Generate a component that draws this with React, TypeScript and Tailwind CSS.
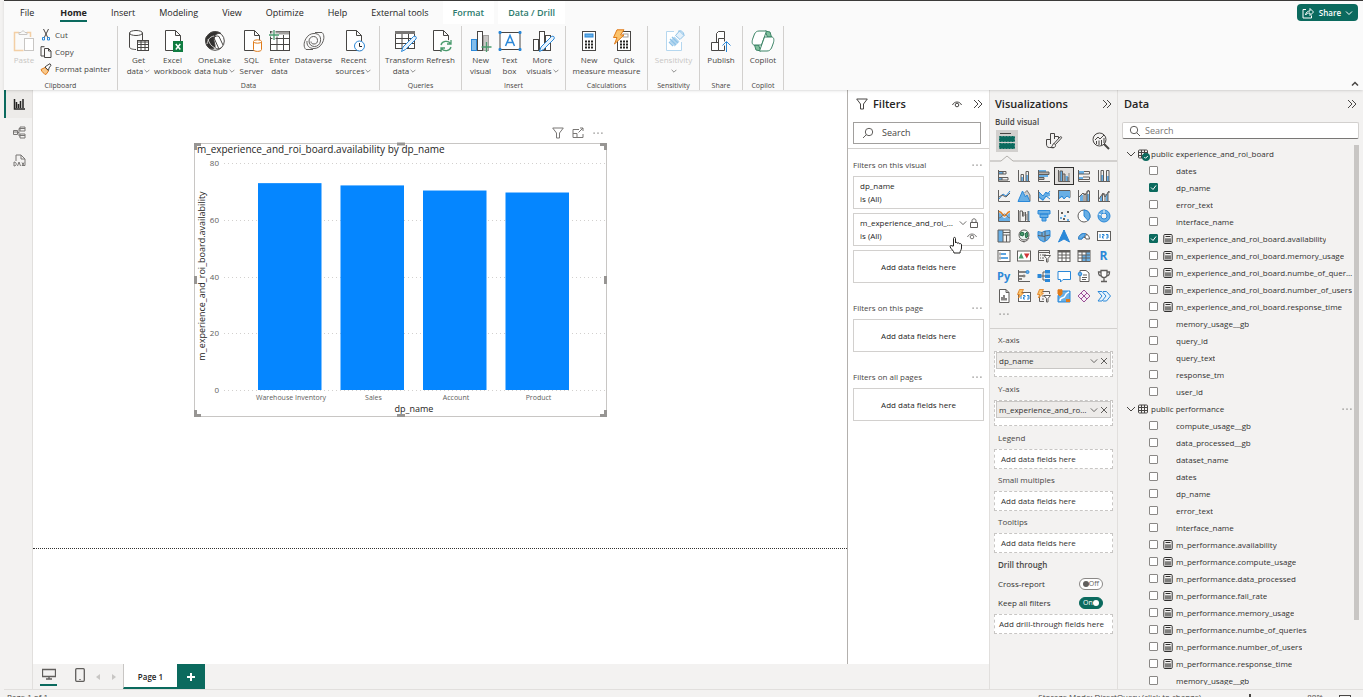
import React, { useState } from 'react';
import clsx from 'clsx';

type IconProps = { className?: string; box?: string; stroke?: string; children: React.ReactNode };

const Svg: React.FC<IconProps> = ({ className, box = '0 0 24 24', stroke = '#484644', children }) => (
  <svg viewBox={box} className={clsx('shrink-0', className)} fill="none" stroke={stroke} strokeWidth="1" aria-hidden="true">
    {children}
  </svg>
);

const BLUE = '#2b88d8';
const SKY = '#69afe5';
const GRAY = '#b3b0ad';
const ORANGE = '#e07b1a';
const GREEN = '#4a9b6e';

/* ---------- small shared glyphs ---------- */

const Chevrons = () => (
  <Svg box="0 0 10 10" className="size-2.5">
    <path d="M1 1l4 4-4 4M5 1l4 4-4 4" />
  </Svg>
);
const Down: React.FC<{ className?: string }> = ({ className = 'size-2.5' }) => (
  <Svg box="0 0 10 10" className={className}>
    <path d="M1 3l4 4 4-4" />
  </Svg>
);
const Cross = () => (
  <Svg box="0 0 8 8" className="size-2" stroke="#605e5c">
    <path d="M1 1l6 6M7 1L1 7" />
  </Svg>
);
const Eye: React.FC<{ stroke?: string }> = ({ stroke }) => (
  <Svg box="0 0 12 10" className="h-2.5 w-3" stroke={stroke}>
    <path d="M1.500 6C3 2 9 2 10.500 6" />
    <circle cx="6" cy="6" r="1.800" />
  </Svg>
);
const Funnel: React.FC<{ stroke?: string }> = ({ stroke }) => (
  <Svg box="0 0 12 12" className="size-3" stroke={stroke}>
    <path d="M.7 1h10.600L7.500 6v5h-3V6z" />
  </Svg>
);
const Lens: React.FC<{ flip?: boolean }> = ({ flip }) => (
  <Svg box="0 0 12 12" className={clsx('size-3', flip && '-scale-x-100')} stroke="#605e5c">
    <circle cx="5" cy="5" r="3.700" />
    <path d="M7.700 7.700L11 11" />
  </Svg>
);
const Dots: React.FC<{ className?: string }> = ({ className = 'w-2.5' }) => (
  <Svg box="0 0 10 4" className={clsx('h-1', className)}>
    <path stroke="none" fill="#797775" d="M.5 1.500h1.200v1.200H.5zM4.400 1.500h1.200v1.200H4.400zM8.300 1.500h1.200v1.200H8.300z" />
  </Svg>
);
const Calc = () => (
  <Svg box="0 0 10 10" className="size-2.5" stroke="#323130">
    <rect x=".8" y=".5" width="8.400" height="9" rx="1" />
    <path d="M2.500 2.500h5" />
    <path d="M3 4.200v4.300M5 4.200v4.300M7 4.200v4.300" strokeWidth="1.200" />
  </Svg>
);

/* ---------- ribbon icons ---------- */

const page = <path d="M4.500 1.500h10l5 5v15h-15zM14.500 1.500v5h5" fill="#fff" />;
const calculator = (
  <>
    <rect x="5.500" y="2.500" width="13" height="19" fill="#fff" />
    <path d="M8 12.500h8M8 15.500h8M8 18.500h8" strokeWidth="2" strokeDasharray="2 1" stroke="#252423" />
  </>
);
const pencil = <path d="M8.500 22.500l1.500-4.500L20.500 7.500c2-1 3.500.5 2.500 2.500L12.500 20.500z" fill="#e8f3fc" stroke={BLUE} />;

const RIBBON: Record<string, React.ReactNode> = {
  paste: (
    <>
      <path d="M7 3.500H2.500v18h9M15 3.500h3.500V8" stroke="#f3cfa5" strokeWidth="1.500" />
      <path d="M7 5.500v-2h2l2-2 2 2h2v2z" stroke="#c8c6c4" />
      <rect x="12.500" y="9.500" width="9" height="12" stroke="#c8c6c4" fill="#fff" />
    </>
  ),
  getData: (
    <>
      <ellipse cx="9" cy="4" rx="6.500" ry="2.500" fill="#fff" />
      <path d="M2.500 4v14c0 1.500 3 2.500 6.500 2.500M15.500 4v7" />
      <rect x="10.500" y="11.500" width="11" height="10" fill="#fff" />
      <path d="M10.500 13h11M10.500 15.500h11M10.500 18.500h11M14 12v9.500M18 12v9.500" />
    </>
  ),
  excel: (
    <>
      {page}
      <rect x="12" y="12" width="10" height="11" fill="#107c41" stroke="none" />
      <path d="M14.800 15l4.500 5.500M19.300 15l-4.500 5.500" stroke="#fff" strokeWidth="1.500" />
    </>
  ),
  oneLake: (
    <>
      <circle cx="12" cy="12" r="9.300" fill="#fff" />
      <path d="M4.500 6.500C8 1.500 15 2 18 4.500c-3.500-.5-6.500 1-7 4.500-.5 4 1.500 6 1 9.500C9 21.500 4 19 3 14s.3-6 1.500-7.500z" fill="#323130" />
      <path d="M11 9c1-2 3-2.500 5-1.500L20 16M11 9l5 11M12 18.500c2 2 5 1.500 6.500 0" />
      <path d="M4 15c1-4 2-7 7-8M5 10c1 4 3 7 7 9" stroke="#d2d0ce" />
    </>
  ),
  sql: (
    <>
      {page}
      <path d="M13.500 13v7.500c0 2.500 8 2.500 8 0V13" fill="#fff" stroke={ORANGE} />
      <ellipse cx="17.500" cy="12.500" rx="4" ry="1.700" fill="#fff" stroke={ORANGE} />
    </>
  ),
  enter: (
    <>
      <rect x="2.500" y="2.500" width="19" height="19" fill="#fff" />
      <path d="M3 4h18" stroke="#a19f9d" strokeWidth="3" />
      <path d="M2.500 9.500h19M2.500 15.500h19M9 6v16M15.500 6v16" />
      <path d="M6 0v11M1 6h10" stroke="#fafafa" strokeWidth="3" />
      <path d="M6 1v10M1 6h10" stroke={GREEN} strokeWidth="1.300" />
    </>
  ),
  dataverse: (
    <g stroke="#605e5c">
      <path d="M13 3.500h7c2.500 2 2.500 7 0 11-2 3.500-5 5-8 5M11 20.500H4c-2.500-2-2.500-7 0-11 2-3.500 5-5 8-5" />
      <path d="M12 4.500c5 0 7 3 6.500 7.500-.5 3.500-3 5.500-6 5.500-3.500 0-5.500-2.500-5.500-5.500 0-2.500 2-4.500 4.500-4.500s4 1.500 4 4-1.500 3.500-3.500 3.500-3-1-3-2.500" />
      <path d="M12 19.500c-5 0-7.500-3-7-7.500" />
    </g>
  ),
  recent: (
    <>
      {page}
      <circle cx="17.500" cy="17" r="5" fill="#fff" stroke={BLUE} />
      <path d="M17.500 14v3.500H20" stroke="#252423" />
    </>
  ),
  transform: (
    <>
      <rect x="2.500" y="2.500" width="19" height="17" fill="#fff" />
      <path d="M2 3.500h20" strokeWidth="3" stroke="#797775" />
      <path d="M2.500 9.500h19M2.500 14.500h19M9 5v15M15.500 5v15" />
      {pencil}
    </>
  ),
  refresh: (
    <>
      {page}
      <circle cx="17" cy="17" r="6.500" fill="#fafafa" stroke="none" />
      <path d="M12 16c1-4 7-5 9.500-1.500M22 11v4h-4M22 18c-1 4-7 5-9.500 1.500M12 23v-4h4" stroke={GREEN} strokeWidth="1.300" />
    </>
  ),
  newVisual: (
    <>
      <rect x="2.500" y="10.500" width="5" height="11" fill="#83bdeb" stroke={BLUE} />
      <rect x="8.500" y="2.500" width="5" height="19" fill="#fff" />
      <rect x="14.500" y="6.500" width="5" height="15" fill="#c8c6c4" stroke="#a19f9d" />
      <path d="M17.500 13v10M12.500 18h10" stroke={GREEN} strokeWidth="1.300" />
    </>
  ),
  textBox: (
    <>
      <rect x="2" y="3.500" width="20" height="17" fill="#fff" />
      <path d="M1 2.500h2v2H1zM21 2.500h2v2h-2zM1 19.500h2v2H1zM21 19.500h2v2h-2z" fill={BLUE} stroke={BLUE} />
      <path d="M7.500 17L12 6.500 16.500 17M9 13.500h6" stroke={BLUE} strokeWidth="1.500" />
    </>
  ),
  moreVisuals: (
    <>
      <rect x="2.500" y="10.500" width="5" height="11" fill="#fff" />
      <rect x="8.500" y="2.500" width="5" height="19" fill="#fff" />
      <rect x="14.500" y="6.500" width="5" height="15" fill="#fff" />
      {pencil}
    </>
  ),
  newMeasure: (
    <>
      {calculator}
      <rect x="8" y="5" width="8" height="3" fill={SKY} stroke={BLUE} />
    </>
  ),
  quickMeasure: (
    <>
      {calculator}
      <rect x="11" y="5" width="5" height="3" stroke="#a19f9d" />
      <path d="M5 .8h7L8.500 6H12L2.500 15l2.500-6.500H1.500z" fill="#fbc36b" stroke={ORANGE} />
    </>
  ),
  sensitivity: (
    <>
      <path d="M12 2.500H4.500v19h15V13" stroke="#b5d7ef" fill="#fff" />
      <path d="M7.500 12.500l5-5 5 5-5 5z" fill="#b5d7ef" stroke="none" />
      <path d="M8 10l6 6M10 8l6 6M7 13l4 4" stroke="#8fc3e8" strokeWidth="1.300" />
      <path d="M13.500 6.500l4-4.500 4.500 4.500-4 4zM16 2.500c2-2 6 0 6 4" stroke="#8fc3e8" fill="#e3f0fa" />
    </>
  ),
  publish: (
    <>
      <path d="M7.500 13V4.500l2-2h6v7M2.500 13.500h7v8h-7zM9.500 9.500h6v12h-6z" fill="#fff" />
      <path d="M17.500 23V13M13.500 16.500l4-4 4 4" stroke="#fafafa" strokeWidth="3" />
      <path d="M17.500 23V13M13.500 16.500l4-4 4 4" stroke={BLUE} />
    </>
  ),
  copilot: (
    <g stroke="#3c8466">
      <path d="M14 2l5 1 1.500 5h-4z" fill="#7fbf9c" />
      <path d="M10 22l-5-1-1.500-5h4z" fill="#7fbf9c" />
      <path d="M8 2h7.500L10.500 16H3.500C.5 16 .8 12 2 9l1.500-4C4.500 3 6 2 8 2z" fill="#fff" />
      <path d="M16 22H8.500l5-14h7c3 0 2.700 4 1.500 7l-1.500 4c-1 2-2.500 3-4.500 3z" fill="#fff" />
    </g>
  ),
};

interface RibbonItem {
  icon: string;
  lines: string[];
  width: string;
  menu?: boolean;
  disabled?: boolean;
}

const RIBBON_GROUPS: { name: string; width: string; items: RibbonItem[] }[] = [
  {
    name: 'Data',
    width: 'w-[262px]',
    items: [
      { icon: 'getData', lines: ['Get', 'data'], width: 'w-7', menu: true },
      { icon: 'excel', lines: ['Excel', 'workbook'], width: 'w-10' },
      { icon: 'oneLake', lines: ['OneLake', 'data hub'], width: 'w-11', menu: true },
      { icon: 'sql', lines: ['SQL', 'Server'], width: 'w-[30px]' },
      { icon: 'enter', lines: ['Enter', 'data'], width: 'w-[26px]' },
      { icon: 'dataverse', lines: ['Dataverse'], width: 'w-[42px]' },
      { icon: 'recent', lines: ['Recent', 'sources'], width: 'w-[38px]', menu: true },
    ],
  },
  {
    name: 'Queries',
    width: 'w-[82px]',
    items: [
      { icon: 'transform', lines: ['Transform', 'data'], width: 'w-10', menu: true },
      { icon: 'refresh', lines: ['Refresh'], width: 'w-8' },
    ],
  },
  {
    name: 'Insert',
    width: 'w-[104px]',
    items: [
      { icon: 'newVisual', lines: ['New', 'visual'], width: 'w-7' },
      { icon: 'textBox', lines: ['Text', 'box'], width: 'w-[30px]' },
      { icon: 'moreVisuals', lines: ['More', 'visuals'], width: 'w-9', menu: true },
    ],
  },
  {
    name: 'Calculations',
    width: 'w-[82px]',
    items: [
      { icon: 'newMeasure', lines: ['New', 'measure'], width: 'w-[35px]' },
      { icon: 'quickMeasure', lines: ['Quick', 'measure'], width: 'w-[35px]' },
    ],
  },
  {
    name: 'Sensitivity',
    width: 'w-[52px]',
    items: [{ icon: 'sensitivity', lines: ['Sensitivity', ''], width: 'w-11', menu: true, disabled: true }],
  },
  { name: 'Share', width: 'w-[43px]', items: [{ icon: 'publish', lines: ['Publish'], width: 'w-9' }] },
  { name: 'Copilot', width: 'w-[41px]', items: [{ icon: 'copilot', lines: ['Copilot'], width: 'w-9' }] },
];

const TABS = ['File', 'Home', 'Insert', 'Modeling', 'View', 'Optimize', 'Help', 'External tools', 'Format', 'Data / Drill'];

const RibbonButton: React.FC<{ item: RibbonItem }> = ({ item }) => (
  <button
    type="button"
    disabled={item.disabled}
    className={clsx('flex shrink-0 flex-col items-center whitespace-nowrap', item.width, item.disabled && 'text-[#c8c6c4]')}
  >
    <Svg className="size-6">{RIBBON[item.icon]}</Svg>
    <span className="mt-px flex flex-col items-center leading-[11px]">
      {item.lines.map((line, i) => (
        <span key={i} className="flex h-[11px] items-center gap-px">
          {line}
          {item.menu && i === item.lines.length - 1 && <Down className="size-1.5" />}
        </span>
      ))}
    </span>
  </button>
);

const Ribbon = () => (
  <header className="relative z-10 flex h-[90px] shrink-0 flex-col border-t border-[#3b3a39] bg-[#fafafa] shadow-sm">
    <div className="flex h-[23px] items-stretch pl-1.5 text-[9px]">
      <nav className="flex gap-1">
        {TABS.map((tab, i) => (
          <button
            key={tab}
            type="button"
            className={clsx(
              'relative px-2.5 whitespace-nowrap',
              tab === 'File' && 'mr-0.5',
              i > 7 && 'bg-white font-semibold text-[#2b7a6d]',
              tab === 'Home' && 'font-bold'
            )}
          >
            {tab}
            {tab === 'Home' && <span className="absolute inset-x-2.5 bottom-0.5 h-0.5 bg-[#0b6a5e]" />}
          </button>
        ))}
      </nav>
      <button type="button" className="mt-[3px] mr-[5px] ml-auto flex h-[17px] items-center gap-[5px] rounded-sm bg-[#0b6a5e] px-[5px] text-[8px] font-semibold text-white">
        <Svg box="0 0 12 12" className="size-3" stroke="#fff">
          <path d="M4 2.500H1v8.500h8.500V8.500M3.500 8C4 5 6 4 8 4V1.500l3.500 3.500L8 8.500V6c-2 0-3.500.5-4.500 2z" />
        </Svg>
        <span className="flex items-center gap-1">
          Share
          <Svg box="0 0 8 8" className="size-2" stroke="#fff">
            <path d="M1 2.500l3 3 3-3" />
          </Svg>
        </span>
      </button>
    </div>

    <div className="flex min-h-0 flex-1 pt-0.5 text-[8px] text-[#484644]">
      <section className="flex w-[114px] shrink-0 flex-col items-center border-r border-[#d2d0ce]">
        <div className="flex w-full flex-1 gap-1 pt-[3px] pl-2">
          <button type="button" disabled className="flex w-6 flex-col items-center text-[#c8c6c4]">
            <Svg className="size-6">{RIBBON.paste}</Svg>
            <span className="mt-px leading-[11px]">Paste</span>
          </button>
          <div className="flex flex-col">
            <button type="button" className="flex h-[17px] items-center gap-[3px] pb-1.5">
              <Svg box="0 0 12 12" className="size-3">
                <path d="M3.500 0L8 9M8.500 0L4 9" />
                <path d="M2.500 8.500h2v2.500h-2zM7.500 8.500h2v2.500h-2z" stroke={BLUE} />
              </Svg>
              Cut
            </button>
            <button type="button" className="flex h-[17px] items-center gap-[3px] pb-1.5">
              <Svg box="0 0 12 12" className="size-3">
                <path d="M4 10H1V.7h3.500M4.500 2.500h4L11 5v6.500H4.500zM8.500 2.500V5H11" />
              </Svg>
              Copy
            </button>
            <button type="button" className="flex h-[17px] items-center gap-[3px] pb-1.5 whitespace-nowrap">
              <Svg box="0 0 12 12" className="size-3">
                <path d="M1 6.500l4-2 3.500 3.500L6 11.500C4 11 2 9 1 6.500z" fill="#f9c98c" stroke={ORANGE} />
                <path d="M5 4l2-1.500L10 .7l1 1.500-2 2.800L8.500 7.500z" fill="#fff" />
              </Svg>
              Format painter
            </button>
          </div>
        </div>
        <span className="text-[7px] leading-[9px]">Clipboard</span>
      </section>
      {RIBBON_GROUPS.map(group => (
        <section key={group.name} className={clsx('flex shrink-0 flex-col items-center border-r border-[#d2d0ce]', group.width)}>
          <div className="flex flex-1 items-start justify-center pt-[3px]">
            {group.items.map(item => (
              <RibbonButton key={item.icon} item={item} />
            ))}
          </div>
          <span className="text-[7px] leading-[9px]">{group.name}</span>
        </section>
      ))}
      <button type="button" aria-label="Collapse ribbon" className="mt-auto mr-1 mb-0.5 ml-auto">
        <Svg box="0 0 8 8" className="size-2">
          <path d="M1 5.500l3-3 3 3" strokeWidth="1.500" />
        </Svg>
      </button>
    </div>
  </header>
);

/* ---------- report canvas ---------- */

const BARS = [
  { label: 'Warehouse Inventory', value: 72.9 },
  { label: 'Sales', value: 72.1 },
  { label: 'Account', value: 70.3 },
  { label: 'Product', value: 69.6 },
];
const TICKS = [80, 60, 40, 20, 0];
const yOf = (v: number) => 247 - (v * 227) / 80;

const BarChart = () => (
  <svg viewBox="0 0 413 274" className="block w-full overflow-visible" role="img" aria-label="m_experience_and_roi_board.availability by dp_name">
    {TICKS.map(t => (
      <g key={t}>
        <path d={`M30 ${Math.round(yOf(t)) + 0.5}H411`} stroke="#d2d0ce" strokeDasharray="1 3" />
        <text x="25" y={yOf(t) + 3} textAnchor="end" fontSize="8" fill="#605e5c">{t}</text>
      </g>
    ))}
    {BARS.map((b, i) => (
      <g key={b.label}>
        <rect x={64 + i * 82.5} y={yOf(b.value)} width="63.500" height={247 - yOf(b.value)} fill="#0586ff" />
        <text x={97 + i * 82.5} y="257" textAnchor="middle" fontSize="7" fill="#605e5c">{b.label}</text>
      </g>
    ))}
    <text x="220" y="269" textAnchor="middle" fontSize="9" fill="#252423">dp_name</text>
    <text transform="translate(11 133) rotate(-90)" textAnchor="middle" fontSize="9" fill="#252423">
      m_experience_and_roi_board.availability
    </text>
    {/* selection frame and its resize handles */}
    <rect x=".5" y=".5" width="412" height="273" fill="none" stroke="#c8c6c4" />
    <path
      d="M1.500 7V1.500H7M406 1.500h5.500V7M1.500 267v5.500H7M406 272.500h5.500V267M203 1h8M203 272.500h8M1.500 133v8M411.500 133v8"
      fill="none"
      stroke="#979593"
      strokeWidth="3"
    />
    <text x="3" y="10" fontSize="10" fill="#252423">m_experience_and_roi_board.availability by dp_name</text>
  </svg>
);

const Canvas = () => (
  <main className="relative min-w-0 flex-1 overflow-hidden bg-white">
    <div className="h-[459px] border-b border-dotted border-[#323130]" />
    <figure className="absolute top-[37px] left-[161px] w-[413px]">
      <div className="flex h-4 items-start justify-end gap-2 pr-[3px]">
        <Funnel stroke="#797775" />
        <Svg box="0 0 12 12" className="size-3" stroke="#797775">
          <path d="M7 2.500H1v8h10V7M1 6.500h4v4M6.500 5.500L11 1M8 1h3v3" />
        </Svg>
        <span className="pt-1"><Dots className="w-3" /></span>
      </div>
      <BarChart />
    </figure>
  </main>
);

const RAIL = [
  { name: 'Report view', art: <path d="M1.500 1v10H12M3.500 4v6M5.500 6v4M7.500 3v7M10 1v9" strokeWidth="1.500" stroke="#252423" /> },
  { name: 'Model view', art: <path d="M7 1h5v4H7zM7 8h5v4H7zM.5 4.500h4v4h-4zM4.500 6.500H6v-4h1M6 6.500V10h1M7 2.500h5M7 9.500h5M.5 6h4" stroke="#797775" /> },
  { name: 'DAX query view', art: <path d="M3 7V1h5l4 4v6.500H9M8 1v4h4M1 8v4M1 8c3 0 3 4 0 4M4.500 12L6 8l1.500 4M9 8.500l2 3.500M11 8.500L9 12" stroke="#797775" /> },
];

const Rail = () => (
  <nav className="flex w-[29px] shrink-0 flex-col border-r border-[#e1dfdd]">
    {RAIL.map((view, i) => (
      <button
        key={view.name}
        type="button"
        aria-label={view.name}
        className={clsx('flex h-7 items-center justify-center border-l-2', i === 0 ? 'border-[#0b6a5e] bg-[#edebe9]' : 'border-transparent')}
      >
        <Svg box="0 0 13 13" className="size-[13px]">{view.art}</Svg>
      </button>
    ))}
  </nav>
);

const PageTabs = () => (
  <footer className="flex h-[25px] shrink-0 items-stretch">
    <button type="button" aria-label="Desktop layout" className="mb-[3px] ml-[7px] flex w-[17px] flex-col items-center border-b-2 border-[#0b6a5e] pt-1">
      <Svg box="0 0 14 12" className="h-3 w-3.5" stroke="#605e5c">
        <path d="M.5 1.500h13v7H.5zM7 8.500v2M4 11h6" strokeWidth="1.300" />
      </Svg>
    </button>
    <button type="button" aria-label="Mobile layout" className="ml-[15px] flex w-4 justify-center pt-1">
      <Svg box="0 0 10 14" className="h-3.5 w-2.5" stroke="#605e5c">
        <rect x=".7" y=".7" width="8.600" height="12.600" rx="1" strokeWidth="1.300" />
        <path d="M4.300 11.500h1.400" />
      </Svg>
    </button>
    <div className="flex w-[35px] items-center justify-center gap-3">
      <Svg box="0 0 4 6" className="h-1.5 w-1"><path d="M4 0v6L0 3z" fill="#c8c6c4" stroke="none" /></Svg>
      <Svg box="0 0 4 6" className="h-1.5 w-1"><path d="M0 0v6l4-3z" fill="#c8c6c4" stroke="none" /></Svg>
    </div>
    <button type="button" className="w-[54px] border-b-2 border-l border-b-[#0b6a5e] border-l-[#c8c6c4] bg-white pt-0.5 text-[8px] font-semibold">
      Page 1
    </button>
    <button type="button" aria-label="New page" className="flex w-7 items-center justify-center bg-[#0b6a5e]">
      <Svg box="0 0 8 8" className="size-2"><path d="M4 0v8M0 4h8" stroke="#fff" strokeWidth="2" /></Svg>
    </button>
  </footer>
);

/* ---------- filters ---------- */

const DropBox = () => (
  <div className="mr-[5px] flex h-[33px] items-center justify-center border border-[#d2d0ce] bg-white">Add data fields here</div>
);
const FilterHeading: React.FC<{ children: string }> = ({ children }) => (
  <h3 className="flex h-[22px] items-center justify-between pr-[7px] text-[#484644]">
    {children}
    <Dots />
  </h3>
);

const FiltersPane = () => (
  <aside className="w-[142px] shrink-0 border-l border-[#b3b0ad] bg-white text-[8px]">
    <div className="flex h-7 items-center pr-1.5 pl-2">
      <Funnel />
      <h2 className="ml-[5px] text-[11px] font-semibold">Filters</h2>
      <button type="button" aria-label="Hide filters" className="mr-2.5 ml-auto"><Eye /></button>
      <button type="button" aria-label="Collapse filters"><Chevrons /></button>
    </div>
    <div className="border-b border-[#d2d0ce] pt-1 pr-2 pb-1 pl-[5px]">
      <label className="flex h-[22px] items-center gap-2 border border-[#a19f9d] px-2">
        <Lens flip />
        <input type="search" placeholder="Search" aria-label="Search filters" className="w-full min-w-0 text-[9px] outline-none placeholder:text-[#484644]" />
      </label>
    </div>
    <div className="pt-[5px] pl-[5px]">
      <FilterHeading>Filters on this visual</FilterHeading>
      <div className="mr-[5px] mb-1 h-[33px] border border-[#d2d0ce] px-1.5 pt-0.5 leading-[13px]">
        <p>dp_name</p>
        <p>is (All)</p>
      </div>
      <div className="relative mr-[5px] mb-1 h-[33px] border border-[#d2d0ce] pt-0.5 pr-[5px] pl-1.5 leading-[13px]">
        <div className="flex items-center gap-[3px]">
          <p className="min-w-0 flex-1 truncate">m_experience_and_roi_board.availability</p>
          <Down className="size-2" />
          <Svg box="0 0 8 10" className="h-2.5 w-2" stroke="#605e5c">
            <path d="M.5 4.500h7v5h-7zM2 4.500V2.500C2 .3 6 .3 6 2.500v2" />
          </Svg>
        </div>
        <div className="flex items-center justify-between">
          <p>is (All)</p>
          <Eye stroke="#797775" />
        </div>
        {/* pointer resting on the card */}
        <Svg box="0 0 14 18" className="absolute top-[22px] left-[95px] z-10 h-[18px] w-3.5">
          <path
            d="M4.500 10V2.500c0-1.500 2-1.500 2 0V7c.5-1 2-.8 2 .3.5-.8 2-.5 2 .5.700-.5 2-.2 2 .9V12c0 2-1.500 2.500-1.500 5H5c0-2-3-4-3.800-6-.5-1.500 1-2 1.800-1z"
            fill="#fff"
            stroke="#252423"
          />
        </Svg>
      </div>
      <DropBox />
      <div className="h-3.5" />
      <FilterHeading>Filters on this page</FilterHeading>
      <DropBox />
      <div className="h-3.5" />
      <FilterHeading>Filters on all pages</FilterHeading>
      <DropBox />
    </div>
  </aside>
);

/* ---------- visualizations ---------- */

const axes = <path d="M1.500 1v11.500H13" />;
const bolt = <path d="M2.500.5h4L4.500 4h2L1.500 9l1-3.500H.5z" fill="#fbc36b" stroke={ORANGE} strokeWidth=".8" />;
const digits = <path d="M3 5v4M5 5.500h2v1.500H5.500V9H7M9 5.500h2V9H9M9.500 7H11" stroke={BLUE} />;
const solid = (d: string, fill: string) => <path d={d} fill={fill} stroke="none" />;

const VISUALS: [string, React.ReactNode][] = [
  ['Stacked bar chart', <>{axes}{solid('M2 2h4v3H2zM2 8h3v3H2z', SKY)}<path d="M2 2.500h7v2.500H2M6 2.500V5M2 8.500h9v2.500H2M5 8.500V11" /></>],
  ['Stacked column chart', <>{axes}{solid('M4 8h2.500v4H4zM9 6h2.500v6H9z', SKY)}<path d="M4 12V5.500h2.500V12M9 12V2.500h2.500V12" /></>],
  ['Clustered bar chart', <>{axes}{solid('M2 1h7v2H2zM2 6h9v2H2z', SKY)}{solid('M2 3h10v2H2zM2 8h5v3H2z', GRAY)}<path d="M2 3h10v2.500H2M2 8.500h5v2H2" /></>],
  ['Clustered column chart', <>{axes}{solid('M3 2h2.500v10H3zM8.500 7H11v5H8.500z', SKY)}{solid('M5.500 5H8v7H5.500zM11 4h2v8h-2z', GRAY)}<path d="M3 12V2h2.500v10M5.500 5H8v7M11 12V8" /></>],
  ['100% stacked bar chart', <>{axes}{solid('M2 2h5v3H2zM2 8h4v3H2z', SKY)}<path d="M7 2.500h5.500v2.500H2M6 8h6.500v2.500H2" /></>],
  ['100% stacked column chart', <>{axes}{solid('M4 6h2.500v6H4zM9.500 7H12v5H9.500z', SKY)}<path d="M4 12V1.500h2.500V12M9.500 12V1.500H12V12" /></>],
  ['Line chart', <>{axes}<path d="M2 10l4-5 3 2 4-5" stroke={BLUE} /><path d="M2 8l3-2 4 2 4-4" stroke="#605e5c" /></>],
  ['Area chart', <>{solid('M7 5l3-4 3 5v6.500H7z', '#d2d0ce')}<path d="M1 12.500L5.500 2l3 6 1.500-2 3 6.500z" fill={SKY} stroke={BLUE} /><path d="M7.500 4L10 1.500 13 6v6" stroke="#797775" /></>],
  ['Stacked area chart', <>{axes}{solid('M2 3l4 4 3-4 4 1v3l-4 1-3 4-4-3z', SKY)}<path d="M2 3l4 4 3-4 1.500 2L13 2M2 8l4 3 3-4 4 3" stroke={BLUE} /></>],
  ['100% stacked area chart', <><path d="M1.500 1v11.500H13M1.500 1.500H13v7" />{solid('M2 2h11v7l-3-2-3 3-2-2-3 2z', SKY)}<path d="M2 9.500L5 7l2 3 3-3 3 2" stroke={BLUE} /></>],
  ['Line and stacked column chart', <>{axes}{solid('M3 6h3v6H3zM10 5h2.500v7H10z', SKY)}<path d="M7 12V5h2v7M10 12V2h2.500v10M2 8l4-4 2 2 4-5" /></>],
  ['Line and clustered column chart', <>{axes}{solid('M3 7h2.500v5H3zM9 5h2v7H9z', SKY)}<path d="M5.500 12V5H8v7M11 12V3h2M2 10l4-6 2 4 4-6" /></>],
  ['Ribbon chart', <>{axes}{solid('M2 4c4 0 3 5 5.500 5S10 4 13 4v8H2z', SKY)}<path d="M2 2.500C6 3 5 7 7.500 7S9 3 13 2.500" stroke={ORANGE} strokeWidth="1.500" /><path d="M2 9c3 0 3-4 5.500-4S10 9 13 9" stroke="#797775" /></>],
  ['Waterfall chart', <>{axes}{solid('M6 3h2v4H6zM8.500 5h2v6h-2z', GRAY)}{solid('M11 2h1.500v10H11z', SKY)}<path d="M3 12V2h2.500v5M6 3v5M8.500 3v9M11 2v10" /></>],
  ['Funnel', <>{solid('M1 1.500h12v3.500H1zM3 5h8v3.500H3zM5 8.500h4V12H5z', SKY)}<path d="M1 1.500h12V5H1zM3 5h8v3.500H3zM5 8.500h4V12H5z" stroke={BLUE} /></>],
  ['Scatter chart', <>{axes}{solid('M3 8h2v2H3zM7 6h2v2H7zM10 10h2v2h-2z', SKY)}{solid('M4 3h2v2H4zM10 2h2v2h-2zM6 9h2v2H6z', '#605e5c')}</>],
  ['Pie chart', <><circle cx="7" cy="7" r="6" fill="#fff" /><path d="M7 1a6 6 0 0 1 4 10.500L7 7z" fill={SKY} stroke={BLUE} /></>],
  ['Donut chart', <><circle cx="7" cy="7" r="4.500" stroke={SKY} strokeWidth="3" /><circle cx="7" cy="7" r="6" stroke={BLUE} /><circle cx="7" cy="7" r="3" stroke={BLUE} /><path d="M7 1v3M1.500 5l3 1" stroke="#fff" /></>],
  ['Treemap', <>{solid('M1 1h5v12H1z', SKY)}<path d="M1 1h12v12H1zM6 1v12M6 6h7M9.500 6v7M6 3.500h7" /></>],
  ['Map', <><circle cx="7" cy="6" r="5" fill="#eaf5ef" /><path d="M4 3l3 1-1 3-3-1zM8 5l2-2 1 4-2 2z" fill={GREEN} stroke="#256b48" /><path d="M2 10c3 4 8 3 10-1M7 12v1.500" /></>],
  ['Filled map', <><path d="M1 2.500l4 1 3-1.500 5-.5v6l-2 3-4 2.500-4-2L1 8z" fill={SKY} stroke={BLUE} /><path d="M5 3.500V7M8 2v5l5-1M1 6.500l7 1V12" /></>],
  ['Azure map', <path d="M7 1l5.500 12L7 10z M7 1L1.500 13 7 10z" fill={BLUE} stroke={BLUE} />],
  ['Gauge', <><path d="M1.500 10a5.500 5.500 0 0 1 11 0H9a2 2 0 0 0-4 0z" fill="#fff" /><path d="M1.500 10a5.500 5.500 0 0 1 7-5.300L7 8a2 2 0 0 0-2 2z" fill={SKY} stroke={BLUE} /><path d="M7 9l3-4" /></>],
  ['Card', <><rect x=".5" y="2.500" width="13" height="9" fill="#fff" />{digits}</>],
  ['Multi-row card', <><rect x="1" y="1.500" width="12" height="11" fill="#fff" /><path d="M4 5h5M4 9h7" strokeWidth="1.500" stroke={BLUE} /><path d="M3 3.500v3M3 7.500v3" /></>],
  ['KPI', <><rect x=".5" y="2" width="13" height="10" fill="#fff" />{solid('M1.500 9.500L4.200 4 6.800 9.500z', GREEN)}{solid('M7 4.500h5.500L9.800 9.500z', '#d13438')}</>],
  ['Slicer', <><path d="M7 11.500H1.500v-10h11V5M1.500 3.500h11M3 6h1M5 6h4M3 9h1M5 9h2" /><path d="M7 6.500h6.500L11 9.500V13H9.500V9.500z" fill="#fff" /></>],
  ['Table', <><rect x="1" y="1.500" width="12" height="11" fill="#fff" /><path d="M1 2.500h12" strokeWidth="2" /><path d="M1 6h12M1 9h12M5 2v10M9 2v10" /></>],
  ['Matrix', <><rect x="1" y="1.500" width="12" height="11" fill="#fff" />{solid('M5 6h8v6H5zM9 2h4v4H9z', SKY)}<path d="M1 2.500h12" strokeWidth="2" /><path d="M1 6h12M1 9h12M5 2v10M9 2v10" /></>],
  ['R script visual', <text x="2.500" y="11" fontSize="12" fontWeight="700" fill={BLUE} stroke="none">R</text>],
  ['Python visual', <text x="0" y="11" fontSize="11" fontWeight="700" fill={BLUE} stroke="none">Py</text>],
  ['Key influencers', <>{axes}<path d="M2 3h7M2 7h4M2 10h3" strokeWidth="1.300" /><circle cx="10.500" cy="3" r="1.500" fill={SKY} stroke={BLUE} /><circle cx="7" cy="7" r="1" /></>],
  ['Decomposition tree', <><path d="M4 7h4M6 7V3h3M6 7v4h3" />{solid('M.5 5h4v4h-4zM8 1h5v3.500H8zM8 5.500h5V9H8zM8 10h5v3H8z', BLUE)}</>],
  ['Q&A', <path d="M1 2.500h12.500v8H6L3.500 13v-2.500H1z" stroke={BLUE} fill="#fff" />],
  ['Smart narrative', <><path d="M3 1.500h6L12 4v8.500H3zM6 6h4M5 8.500h5M5 10.500h4" fill="#fff" /><circle cx="3" cy="5" r="1.800" fill={SKY} stroke={BLUE} /></>],
  ['Metrics', <path d="M4 1.500h6v4c0 4-6 4-6 0zM4 3H1.500c0 3 1 4 3 4M10 3h2.500c0 3-1 4-3 4M7 8.500V12M4 12.500h6" fill="#fff" strokeWidth="1.300" />],
  ['Paginated report', <><path d="M2.500.5h6.500l3 3v10H2.500zM9 .5v3h3" fill="#fff" /><path d="M5 11.500V8M7 11.500V6M9 11.500V9" strokeWidth="1.500" /></>],
  ['Card (new)', <><rect x="1.500" y="3.500" width="12" height="9" fill="#fff" /><g transform="translate(1 1)">{digits}</g>{bolt}</>],
  ['Slicer (new)', <><path d="M7 12.500H2.500v-10h10V5M5 7h4M5 10h2" /><path d="M7 6.500h6.500L11 9.500V13H9.500V9.500z" fill="#fff" />{bolt}</>],
  ['ArcGIS map', <><path d="M3 2h10v11H1V7z" fill={SKY} stroke={BLUE} /><path d="M3 12c0-5 4-2 5-5s2-3 4-4" stroke="#fff" strokeWidth="1.500" /><path d="M1 .8h4v4L3 7 1 5z" fill={ORANGE} stroke={ORANGE} />{solid('M9 10h4v3H9z', ORANGE)}</>],
  ['Power Apps', <path d="M7 1l6 6-6 6-6-6zM4 4l6 6M10 4l-6 6" stroke="#9b4f96" fill="#f6ecf5" />],
  ['Power Automate', <path d="M1 2.500h4L9 7l-4 5H1l4-5zM6 2.500h3.500L13.500 7l-4 5H6" stroke={BLUE} fill="#e8f3fc" />],
];

const Well: React.FC<{ title: string; field?: string }> = ({ title, field }) => (
  <section>
    <h3 className="flex h-[22px] items-center pl-1 text-[#484644]">{title}</h3>
    {field ? (
      <div className="mb-px h-[26px] border border-dashed border-[#c8c6c4] bg-white px-px">
        <div className="flex h-[17px] items-center gap-0.5 border border-[#c8c6c4] bg-[#edebe9] px-0.5">
          <span className="min-w-0 flex-1 truncate">{field}</span>
          <button type="button" aria-label={`${field} options`}><Down className="size-2" /></button>
          <button type="button" aria-label={`Remove ${field}`}><Cross /></button>
        </div>
      </div>
    ) : (
      <div className="flex h-5 items-center border border-dashed border-[#c8c6c4] bg-white pl-1.5">Add data fields here</div>
    )}
  </section>
);

const Toggle: React.FC<{ label: string; initial: boolean }> = ({ label, initial }) => {
  const [on, setOn] = useState(initial);
  return (
    <label className="flex h-[19px] items-center justify-between pr-2.5 pl-1">
      {label}
      <input type="checkbox" role="switch" checked={on} onChange={e => setOn(e.target.checked)} className="sr-only" />
      <span
        className={clsx(
          'flex h-3 w-6 items-center justify-between rounded-full border px-[3px] text-[7px] leading-none',
          on ? 'flex-row border-[#0b6a5e] bg-[#0b6a5e] text-white' : 'flex-row-reverse border-[#8a8886] bg-white text-[#605e5c]'
        )}
      >
        {on ? 'On' : 'Off'}
        <span className={clsx('size-1.5 rounded-full', on ? 'bg-white' : 'bg-[#605e5c]')} />
      </span>
    </label>
  );
};

const VisualizationsPane = () => (
  <aside className="w-[128px] shrink-0 border-l border-[#e1dfdd] text-[8px]">
    <div className="flex h-7 items-center justify-between pr-[5px] pl-[5px]">
      <h2 className="text-[11px] font-semibold">Visualizations</h2>
      <button type="button" aria-label="Collapse visualizations"><Chevrons /></button>
    </div>
    <h3 className="h-3 pl-[5px] leading-[8px] font-semibold text-[#484644]">Build visual</h3>
    <div className="relative flex h-8 items-start justify-between border-b-2 border-[#d2d0ce] pr-[5px] pl-1.5">
      <button type="button" aria-label="Build visual" className="flex size-[22px] items-center justify-center bg-[#d2d0ce]">
        <Svg box="0 0 18 18" className="size-[18px]">
          <path d="M2 1.500h11" />
          <path d="M1.500 4.500h15v5h-15zM1.500 11.500h15v5h-15z" fill="#0b6a5e" strokeDasharray="2 1" stroke="#0b6a5e" />
        </Svg>
      </button>
      <button type="button" aria-label="Format visual" className="flex size-[22px] items-center justify-center">
        <Svg box="0 0 18 18" className="size-[18px]">
          <path d="M9 15.500H4.500C2 15.500 1.500 14 1.500 12V7.500h4M5.500 12V1.500h4V7M9.500 4.500h4v2M16.500 6l-6 6.500-1.500-1 6-6.500c1-.8 2 0 1.500 1zM9 11.500c-2 .5-1 3-3 4 3 1 5-.5 4.500-3" />
        </Svg>
      </button>
      <button type="button" aria-label="Analytics" className="flex size-[22px] items-center justify-center">
        <Svg box="0 0 18 18" className="size-[18px]">
          <circle cx="7.500" cy="7.500" r="6.500" />
          <path d="M12 12l5 5" strokeWidth="2" />
          <path d="M3 8l3-3 2 2 4-4M4.500 12V9M7 13V8.500M9.500 13V8M12 11V6" />
        </Svg>
      </button>
      <Svg box="0 0 12 7" className="absolute -bottom-0.5 left-[11px] h-[7px] w-3">
        <path d="M0 6l6-5 6 5v1H0z" fill="#f3f2f1" stroke="none" />
        <path d="M0 6l6-5 6 5" stroke="#b3b0ad" />
      </Svg>
    </div>
    <div className="grid auto-rows-[20px] grid-cols-6 pt-1 pr-[3px] pl-1">
      {VISUALS.map(([name, art]) => (
        <button
          key={name}
          type="button"
          aria-label={name}
          className={clsx('flex items-center justify-center', name === 'Clustered column chart' && 'my-px bg-[#e1dfdd] ring-1 ring-[#323130] ring-inset')}
        >
          <Svg box="0 0 14 14" className="size-3.5" stroke="#605e5c">{art}</Svg>
        </button>
      ))}
    </div>
    <button type="button" aria-label="Get more visuals" className="flex h-[23px] w-full items-start border-b border-[#d2d0ce] pt-1.5 pl-[9px]">
      <Dots />
    </button>
    <div className="mr-1 ml-1 text-[#323130]">
      <Well title="X-axis" field="dp_name" />
      <Well title="Y-axis" field="m_experience_and_roi_board.availability" />
      <Well title="Legend" />
      <Well title="Small multiples" />
      <Well title="Tooltips" />
      <h3 className="flex h-[21px] items-center pt-0.5 pl-1 font-semibold text-[#484644]">Drill through</h3>
      <Toggle label="Cross-report" initial={false} />
      <Toggle label="Keep all filters" initial={true} />
      <div className="mt-0.5 flex h-5 items-center border border-dashed border-[#c8c6c4] bg-white pl-1 whitespace-nowrap">
        Add drill-through fields here
      </div>
    </div>
  </aside>
);

/* ---------- data ---------- */

interface DataTable {
  name: string;
  active?: boolean;
  fields: string[];
}

const DATA_TABLES: DataTable[] = [
  {
    name: 'public experience_and_roi_board',
    active: true,
    fields: [
      'dates', 'dp_name', 'error_text', 'interface_name',
      'm_experience_and_roi_board.availability',
      'm_experience_and_roi_board.memory_usage',
      'm_experience_and_roi_board.numbe_of_queries',
      'm_experience_and_roi_board.number_of_users',
      'm_experience_and_roi_board.response_time',
      'memory_usage__gb', 'query_id', 'query_text', 'response_tm', 'user_id',
    ],
  },
  {
    name: 'public performance',
    fields: [
      'compute_usage__gb', 'data_processed__gb', 'dataset_name', 'dates', 'dp_name', 'error_text', 'interface_name',
      'm_performance.availability', 'm_performance.compute_usage', 'm_performance.data_processed',
      'm_performance.fail_rate', 'm_performance.memory_usage', 'm_performance.numbe_of_queries',
      'm_performance.number_of_users', 'm_performance.response_time', 'memory_usage__gb',
    ],
  },
];

const FieldRow: React.FC<{ name: string; initial: boolean }> = ({ name, initial }) => {
  const [checked, setChecked] = useState(initial);
  return (
    <li>
      <label className="flex h-[17px] items-center pl-[27px]">
        <span className="relative mr-[5px] flex size-[9px] shrink-0">
          <input
            type="checkbox"
            checked={checked}
            onChange={e => setChecked(e.target.checked)}
            className="size-[9px] appearance-none rounded-[1px] border border-[#8a8886] bg-white checked:border-[#0b6a5e] checked:bg-[#0b6a5e]"
          />
          {checked && (
            <Svg box="0 0 9 9" className="pointer-events-none absolute inset-0 size-[9px]" stroke="#fff">
              <path d="M2 4.500l2 2 3-4" />
            </Svg>
          )}
        </span>
        <span className="mr-[3px] w-2.5 shrink-0">{name.startsWith('m_') && <Calc />}</span>
        <span className="truncate">{name}</span>
      </label>
    </li>
  );
};

const DataPane = () => (
  <aside className="flex min-h-0 w-[246px] shrink-0 flex-col border-l border-[#e1dfdd] pr-1 pb-1 text-[8px]">
    <div className="flex h-7 shrink-0 items-center justify-between pr-0.5 pl-1.5">
      <h2 className="text-[11px] font-semibold">Data</h2>
      <button type="button" aria-label="Collapse data"><Chevrons /></button>
    </div>
    <label className="mt-1 ml-1 flex h-[17px] shrink-0 items-center gap-1 rounded-xs border border-[#d2d0ce] border-b-[#797775] bg-white px-1.5">
      <Lens />
      <input type="search" placeholder="Search" aria-label="Search data" className="w-full min-w-0 text-[9px] outline-none placeholder:text-[#797775]" />
    </label>
    <div className="mt-1.5 flex min-h-0 flex-1">
      <div className="min-w-0 flex-1 overflow-hidden pl-1 text-[#323130]">
        {DATA_TABLES.map(table => (
          <section key={table.name}>
            <h3 className="flex h-[17px] items-center pl-1">
              <Down />
              <span className="relative mr-[3px] ml-0.5">
                <Svg box="0 0 10 10" className="size-2.5">
                  <rect x=".5" y="1" width="9" height="8" rx="1" />
                  <path d="M1 3.500h8M1 6.500h8M3.500 1v8M6.500 1v8" />
                </Svg>
                {table.active && (
                  <Svg box="0 0 8 8" className="absolute top-1 left-1 size-2">
                    <circle cx="4" cy="4" r="4" fill="#0b6a5e" stroke="none" />
                    <path d="M2.300 4l1.200 1.300L5.800 3" stroke="#fff" />
                  </Svg>
                )}
              </span>
              {table.name}
              {!table.active && <span className="ml-auto pr-0.5"><Dots /></span>}
            </h3>
            <ul>
              {table.fields.map(field => (
                <FieldRow
                  key={field}
                  name={field}
                  initial={!!table.active && (field === 'dp_name' || field.endsWith('.availability'))}
                />
              ))}
            </ul>
          </section>
        ))}
      </div>
      <div className="w-[5px] shrink-0">
        <div className="h-[88%] bg-[#c8c6c4]" />
      </div>
    </div>
  </aside>
);

const StatusBar = () => (
  <div className="flex h-2 shrink-0 items-start overflow-hidden border-t border-[#e1dfdd] pr-3 pl-[3px] text-[8px] leading-[14px] text-[#484644]">
    <span>Page 1 of 1</span>
    <span className="ml-auto">Storage Mode: DirectQuery (click to change)</span>
    <span className="mt-1 ml-12 h-2 w-0.5 bg-[#484644]" />
    <span className="ml-14">88%</span>
    <span className="mt-[5px] ml-4 h-2 w-3 border border-[#484644]" />
  </div>
);

const App = () => (
  <div
    className="flex h-screen overflow-hidden bg-[#f3f2f1] pl-1 text-[#252423]"
    style={{ fontFamily: '"Open Sans", "Noto Sans", sans-serif' }}
  >
    <div className="flex min-w-0 flex-1 flex-col">
      <Ribbon />
      <div className="flex min-h-0 flex-1">
        <Rail />
        <div className="flex min-w-0 flex-1 flex-col">
          <div className="flex min-h-0 flex-1">
            <Canvas />
            <FiltersPane />
          </div>
          <PageTabs />
        </div>
        <VisualizationsPane />
        <DataPane />
      </div>
      <StatusBar />
    </div>
  </div>
);

export default App;
